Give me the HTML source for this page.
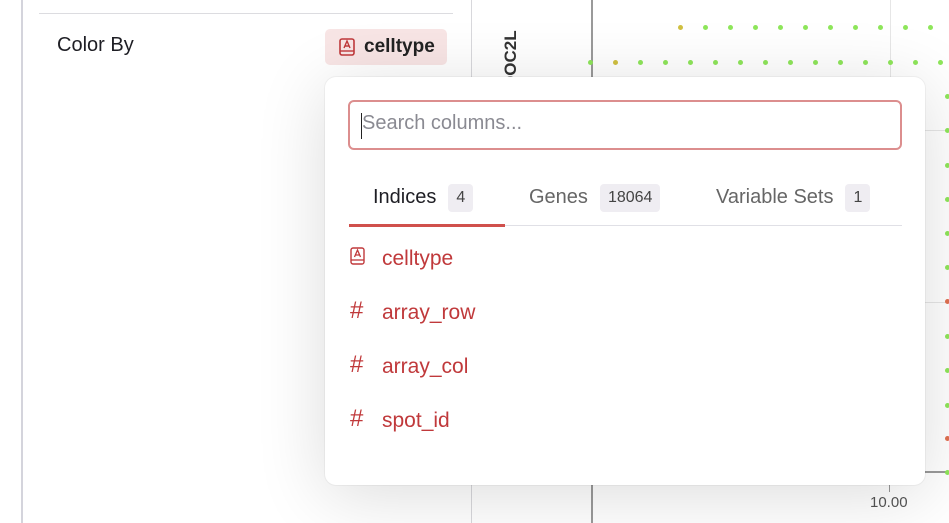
<!DOCTYPE html>
<html><head><style>
body{margin:0;width:949px;height:523px;overflow:hidden;background:#fff;font-family:"Liberation Sans",sans-serif;position:relative}
.a{position:absolute}
.dot{position:absolute;width:5px;height:5px;border-radius:50%;background:#8ee65a}
.tab{position:absolute;top:184px;font-size:20px;color:#666}
.badge{display:inline-block;background:#efedf2;border-radius:4px;font-size:16px;padding:5px 8px;margin-left:12px;color:#444;vertical-align:1px}
.item{position:absolute;left:382px;font-size:21px;color:#c0393b}
.hash{position:absolute;left:350px;font-size:24px;color:#c0393b}
</style></head><body>
<div class="a" style="left:21px;top:0;width:2px;height:523px;background:#d4d4dc"></div>
<div class="a" style="left:39px;top:13px;width:414px;height:1px;background:#dcdce0"></div>
<div class="a" style="left:57px;top:34px;font-size:20px;color:#1e1e24">Color By</div>
<div class="a" style="left:471px;top:0;width:1px;height:523px;background:#d8d8dc"></div>
<div class="a" style="left:591px;top:0;width:2px;height:523px;background:#9a9a9a"></div>
<div class="a" style="left:890px;top:0;width:1px;height:480px;background:#e6e6e6"></div>
<div class="a" style="left:890px;top:130px;width:59px;height:1px;background:#e6e6e6"></div>
<div class="a" style="left:890px;top:302px;width:59px;height:1px;background:#e6e6e6"></div>
<div class="a" style="left:900px;top:471px;width:49px;height:2px;background:#9a9a9a"></div>
<div class="a" style="left:889px;top:484px;width:1px;height:8px;background:#999"></div>
<div class="a" style="left:870px;top:494px;font-size:15px;color:#555">10.00</div>
<div class="a" style="left:501px;top:88px;font-size:17px;font-weight:bold;color:#333;transform:rotate(-90deg);transform-origin:0 0;line-height:20px">DOC2L</div>
<div id="dots"></div>
<div class="a" style="left:325px;top:29px;width:122px;height:36px;background:#f8e5e5;border-radius:5px"></div>
<svg class="a" style="left:339px;top:38px" width="16" height="19" viewBox="0 0 16 19"><rect x="1" y="1" width="14" height="16" rx="2" fill="none" stroke="#c0393b" stroke-width="1.6"/><line x1="1" y1="13" x2="15" y2="13" stroke="#c0393b" stroke-width="1.4"/><path d="M5 10 L8 3 L11 10 M6 8 H10" fill="none" stroke="#c0393b" stroke-width="1.4"/></svg>
<div class="a" style="left:364px;top:36px;font-size:19px;font-weight:bold;color:#222">celltype</div>
<div class="a" style="left:325px;top:77px;width:600px;height:408px;background:#fff;border-radius:11px;box-shadow:0 10px 70px rgba(0,0,0,0.14),0 0 0 1px rgba(0,0,0,0.04)"></div>
<div class="a" style="left:348px;top:100px;width:550px;height:46px;border:2px solid #dc8e8e;border-radius:6px"></div>
<div class="a" style="left:361px;top:113px;width:1px;height:26px;background:#222"></div>
<div class="a" style="left:362px;top:112px;font-size:20px;color:#8a8a92">Search columns...</div>
<div class="tab" style="left:373px;color:#1e1e24">Indices<span class="badge">4</span></div>
<div class="tab" style="left:529px">Genes<span class="badge">18064</span></div>
<div class="tab" style="left:716px">Variable Sets<span class="badge">1</span></div>
<div class="a" style="left:349px;top:225px;width:553px;height:1px;background:#e0e0e6"></div>
<div class="a" style="left:349px;top:224px;width:156px;height:3px;background:#d0504c"></div>
<svg class="a" style="left:350px;top:247px" width="16" height="19" viewBox="0 0 16 19"><rect x="1" y="1" width="13" height="16" rx="2" fill="none" stroke="#c0393b" stroke-width="1.4"/><line x1="1" y1="13" x2="14" y2="13" stroke="#c0393b" stroke-width="1.3"/><path d="M4.5 10 L7.5 3 L10.5 10 M5.5 8 H9.5" fill="none" stroke="#c0393b" stroke-width="1.3"/></svg>
<div class="item" style="top:247px">celltype</div>
<div class="hash" style="top:297px">#</div><div class="item" style="top:301px">array_row</div>
<div class="hash" style="top:351px">#</div><div class="item" style="top:355px">array_col</div>
<div class="hash" style="top:405px">#</div><div class="item" style="top:409px">spot_id</div>
<script>
var d=document.getElementById('dots'),h='';
function p(x,y,c){h+='<div class="dot" style="left:'+(x-2)+'px;top:'+(y-2)+'px'+(c?';background:'+c:'')+'"></div>';}
for(var x=680;x<949;x+=25)p(x,27,x==680?'#d0c040':'');
for(var x=590;x<949;x+=25)p(x,62,x==615?'#d0c040':'');
[96,130,165,199,233,267,301,336,370,405,438,472].forEach(function(y){p(947,y,(y==301||y==438)?'#e07050':'');});
d.innerHTML=h;
</script>
</body></html>
